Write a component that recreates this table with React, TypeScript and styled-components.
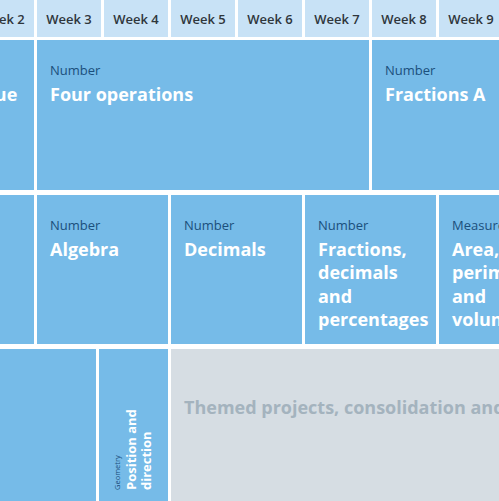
import React from 'react';
import styled, {createGlobalStyle} from "styled-components";

const GlobalStyle = createGlobalStyle`
    html, body {
        margin: 0;
        padding: 0;
        background: #ffffff;
        overflow: hidden;
    }
    body {
        font-family: "Open Sans", "Noto Sans", sans-serif;
    }
`

const WEEK = 64;
const GAP = 3;
const spanWidth = (span: number) => span * WEEK + (span - 1) * GAP;

const weeks = Array.from({length: 12}, (_, i) => `Week ${i + 1}`);

type Unit = { label?: string; title?: string; span: number; nowrap?: boolean };

const autumn: Unit[] = [
    {label: "Number", title: "Place value", span: 2, nowrap: true},
    {label: "Number", title: "Four operations", span: 5},
    {label: "Number", title: "Fractions A", span: 5},
];

const spring: Unit[] = [
    {span: 2},
    {label: "Number", title: "Algebra", span: 2},
    {label: "Number", title: "Decimals", span: 2},
    {label: "Number", title: "Fractions, decimals and percentages", span: 2},
    {label: "Measurement", title: "Area, perimeter and volume", span: 2},
    {label: "Statistics", title: "Statistics", span: 2},
];

export default function App() {
    return (
        <>
            <GlobalStyle/>
            <Frame>
                <Board>
                    <HeaderRow>
                        {weeks.map(w => (
                            <WeekCell key={w}>{w}</WeekCell>
                        ))}
                    </HeaderRow>

                    <Row $height={150}>
                        {autumn.map((u, i) => (
                            <UnitCell key={i} $span={u.span}>
                                <Label>{u.label}</Label>
                                <Title $nowrap={u.nowrap}>{u.title}</Title>
                            </UnitCell>
                        ))}
                    </Row>

                    <Row $height={149}>
                        {spring.map((u, i) => (
                            <UnitCell key={i} $span={u.span}>
                                {u.label && <Label>{u.label}</Label>}
                                {u.title && <Title $nowrap={u.nowrap}>{u.title}</Title>}
                            </UnitCell>
                        ))}
                    </Row>

                    <Row $height={152}>
                        <UnitCell style={{width: 193}}/>
                        <NarrowCell>
                            <Vertical>
                                <SmallLabel>Geometry</SmallLabel>
                                <VerticalTitle>Position and direction</VerticalTitle>
                            </Vertical>
                        </NarrowCell>
                        <ProjectCell>
                            Themed projects, consolidation and assessment
                        </ProjectCell>
                    </Row>
                </Board>
            </Frame>
        </>
    );
}

const Frame = styled.div`
    width: 100vw;
    height: 100vh;
    overflow: hidden;
`

const Board = styled.div`
    display: flex;
    flex-direction: column;
    margin-left: -97px;
    width: ${12 * (WEEK + GAP)}px;
`

const HeaderRow = styled.div`
    display: flex;
    gap: ${GAP}px;
    height: 37px;
    margin-bottom: 3px;
`

const WeekCell = styled.div`
    flex: 0 0 ${WEEK}px;
    display: flex;
    align-items: center;
    justify-content: center;
    background: #c8e2f6;
    color: #2f363c;
    font-size: 13px;
    font-weight: 600;
    white-space: nowrap;
`

const Row = styled.div<{ $height: number }>`
    display: flex;
    gap: ${GAP}px;
    height: ${p => p.$height}px;
    margin-bottom: 5px;
`

const UnitCell = styled.div<{ $span?: number }>`
    flex: 0 0 auto;
    width: ${p => spanWidth(p.$span ?? 1)}px;
    box-sizing: border-box;
    padding: 21px 20px 0 13px;
    background: #76bbe8;
`

const Label = styled.div`
    font-size: 13px;
    line-height: 18px;
    color: #1b4f7c;
    white-space: nowrap;
`

const Title = styled.div<{ $nowrap?: boolean }>`
    margin-top: 4px;
    font-size: 18px;
    line-height: 23.4px;
    font-weight: 700;
    color: #ffffff;
    white-space: ${p => (p.$nowrap ? "nowrap" : "normal")};
`

const NarrowCell = styled.div`
    flex: 0 0 69px;
    box-sizing: border-box;
    display: flex;
    align-items: flex-end;
    padding: 0 0 11px 12px;
    background: #76bbe8;
`

const Vertical = styled.div`
    writing-mode: vertical-rl;
    transform: rotate(180deg);
    white-space: nowrap;
`

const SmallLabel = styled.div`
    font-size: 7.5px;
    line-height: 13px;
    color: #1b4f7c;
`

const VerticalTitle = styled.div`
    height: 84px;
    white-space: normal;
    font-size: 13px;
    line-height: 14.5px;
    font-weight: 700;
    color: #ffffff;
`

const ProjectCell = styled.div`
    flex: 1 1 auto;
    box-sizing: border-box;
    padding: 46px 0 0 13px;
    background: #d6dde3;
    color: #a4b3be;
    font-size: 18px;
    line-height: 24px;
    font-weight: 700;
    white-space: nowrap;
    overflow: hidden;
`
